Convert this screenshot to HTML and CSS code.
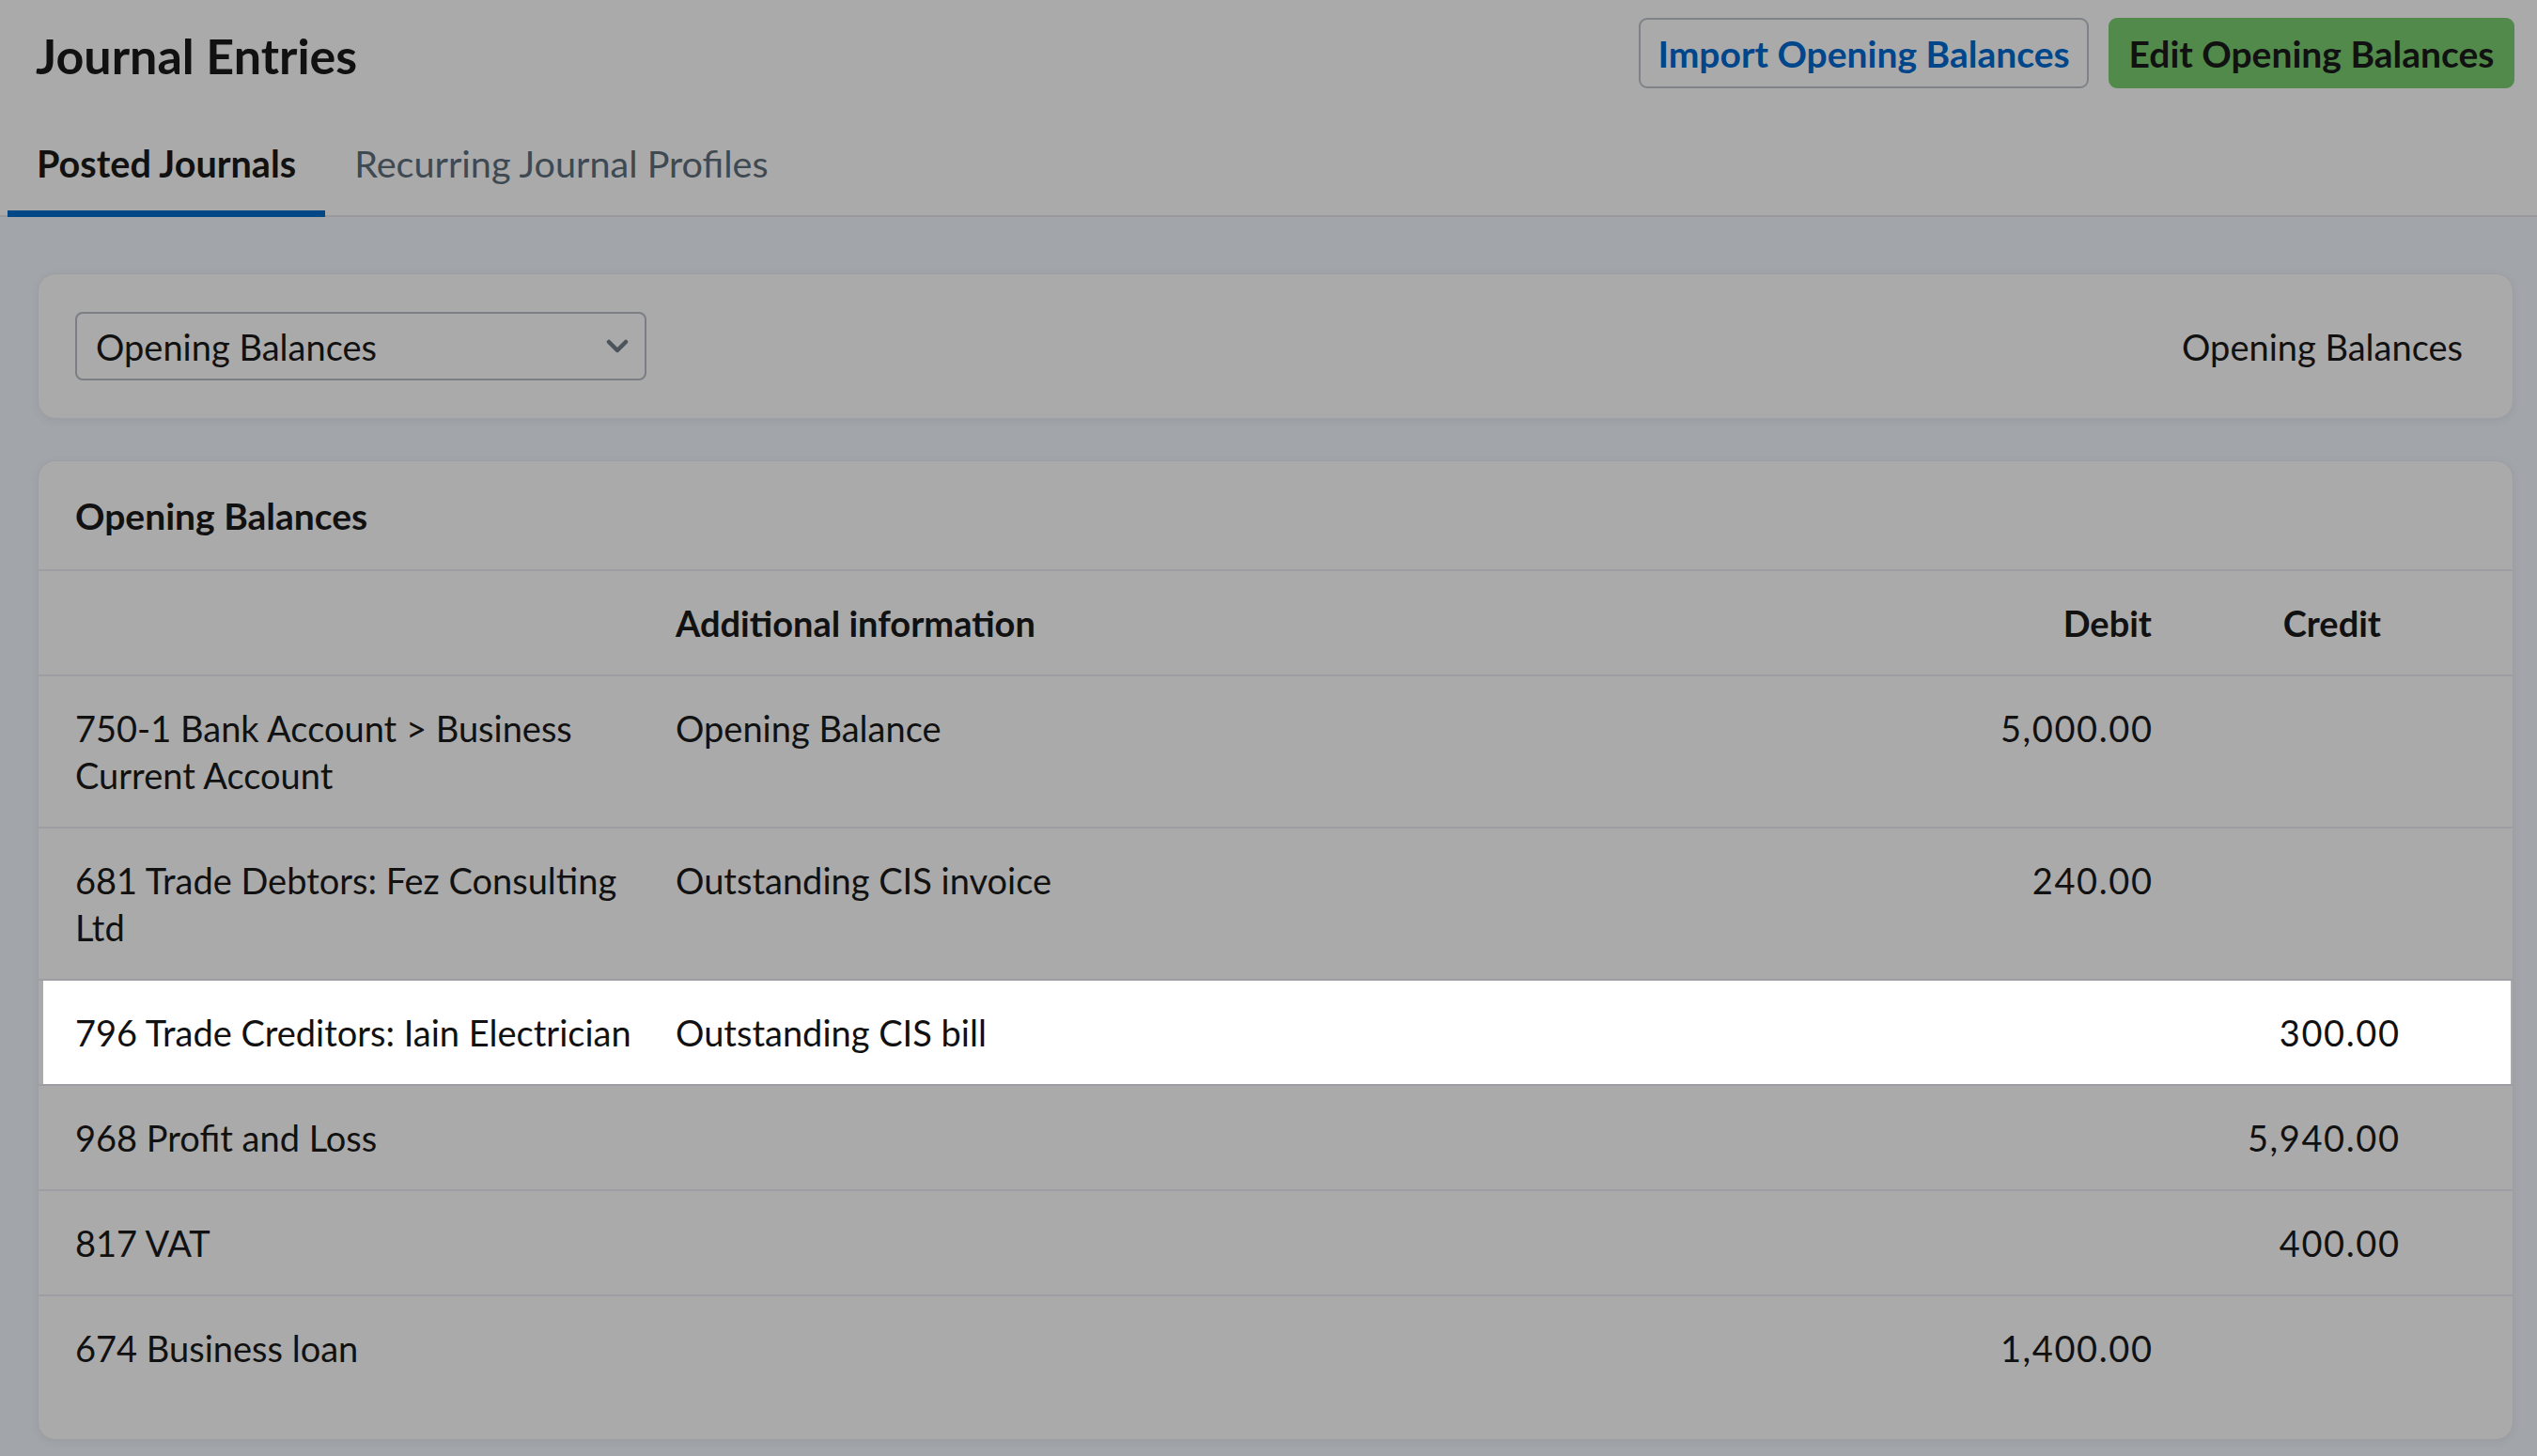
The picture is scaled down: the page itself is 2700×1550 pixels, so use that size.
FILE: index.html
```html
<!DOCTYPE html>
<html lang="en">
<head>
<meta charset="utf-8">
<title>Journal Entries</title>
<link rel="stylesheet" href="styles.css">
</head>
<body>
<header class="page-header">
  <div class="topbar">
    <h1 class="title">Journal Entries</h1>
    <div class="actions">
      <button class="btn btn-outline">Import Opening Balances</button>
      <button class="btn btn-green">Edit Opening Balances</button>
    </div>
  </div>
  <nav class="tabs">
    <a class="tab tab-active">Posted Journals</a>
    <a class="tab">Recurring Journal Profiles</a>
  </nav>
</header>

<main class="content">
  <section class="card filter-card">
    <div class="select">
      <span class="select-value">Opening Balances</span>
      <svg class="chevron" width="24" height="16" viewBox="0 0 24 16"><path d="M3 3 L12 12 L21 3" fill="none" stroke="#4b545c" stroke-width="4.5" stroke-linecap="round" stroke-linejoin="round"/></svg>
    </div>
    <div class="filter-label">Opening Balances</div>
  </section>

  <section class="card table-card">
    <h2 class="card-title">Opening Balances</h2>
    <div class="table">
      <div class="row row-head">
        <div class="cell cell-account"></div>
        <div class="cell">Additional information</div>
        <div class="cell num">Debit</div>
        <div class="cell num credit-head">Credit</div>
      </div>
      <div class="row">
        <div class="cell cell-account">750-1 Bank Account &gt; Business Current Account</div>
        <div class="cell">Opening Balance</div>
        <div class="cell num amount">5,000.00</div>
        <div class="cell num amount"></div>
      </div>
      <div class="row">
        <div class="cell cell-account">681 Trade Debtors: Fez Consulting Ltd</div>
        <div class="cell">Outstanding CIS invoice</div>
        <div class="cell num amount">240.00</div>
        <div class="cell num amount"></div>
      </div>
      <div class="row row-highlight">
        <div class="cell cell-account">796 Trade Creditors: Iain Electrician</div>
        <div class="cell">Outstanding CIS bill</div>
        <div class="cell num amount"></div>
        <div class="cell num amount">300.00</div>
      </div>
      <div class="row">
        <div class="cell cell-account">968 Profit and Loss</div>
        <div class="cell"></div>
        <div class="cell num amount"></div>
        <div class="cell num amount">5,940.00</div>
      </div>
      <div class="row">
        <div class="cell cell-account">817 VAT</div>
        <div class="cell"></div>
        <div class="cell num amount"></div>
        <div class="cell num amount">400.00</div>
      </div>
      <div class="row row-last">
        <div class="cell cell-account">674 Business loan</div>
        <div class="cell"></div>
        <div class="cell num amount">1,400.00</div>
        <div class="cell num amount"></div>
      </div>
    </div>
  </section>
</main>
</body>
</html>
```

FILE: styles.css
```css
* { box-sizing: border-box; }

html, body {
  margin: 0;
  padding: 0;
}

body {
  background: #a2a5aa;
  font-family: Lato, "Noto Sans", sans-serif;
  font-size: 38px;
  line-height: 50px;
  color: #111111;
  min-height: 1550px;
}

.page-header {
  background: #aaaaaa;
}

.topbar {
  display: flex;
  justify-content: space-between;
  align-items: center;
  padding: 19px 24px 0 38px;
}

.title {
  margin: 5px 0 0;
  font-size: 52px;
  line-height: 60px;
  font-weight: 700;
  color: #111111;
}

.actions {
  display: flex;
  gap: 21px;
}

.btn {
  font-family: inherit;
  font-size: 39px;
  font-weight: 700;
  line-height: 52px;
  height: 75px;
  padding: 0 10px;
  border-radius: 9px;
  cursor: pointer;
}

.btn-outline {
  width: 479px;
  background: #aaaaaa;
  border: 2px solid #7f8286;
  color: #00468a;
}

.btn-green {
  width: 432px;
  background: #528a4b;
  border: 2px solid #528a4b;
  color: #111111;
}

.tabs {
  display: flex;
  padding-left: 8px;
  margin-top: 54px;
  border-bottom: 2px solid #9a9a9b;
}

.tab {
  display: block;
  padding: 0 31px 24px;
  margin-bottom: -2px;
  border-bottom: 7px solid transparent;
  color: #3f4952;
  font-size: 39.6px;
  line-height: 52px;
  text-decoration: none;
}

.tab-active {
  color: #111111;
  font-weight: 700;
  border-bottom-color: #004785;
}

.content {
  padding: 60px 25px 10px 40px;
  display: flex;
  flex-direction: column;
  gap: 44px;
}

.card {
  background: #aaaaaa;
  border: 1px solid #9b9ea3;
  border-radius: 19px;
  box-shadow: 0 2px 10px rgba(0, 0, 0, 0.06);
}

.filter-card {
  display: flex;
  align-items: center;
  justify-content: space-between;
  padding: 40px 53px 40px 39px;
}

.select {
  width: 608px;
  height: 73px;
  border: 2px solid #7b7e82;
  border-radius: 8px;
  display: flex;
  align-items: center;
  justify-content: space-between;
  padding: 0 17px 0 20px;
}

.select-value {
  color: #111111;
}

.chevron {
  display: block;
}

.filter-label {
  color: #111111;
}

.table-card {
  padding-bottom: 42px;
}

.card-title {
  margin: 0;
  padding: 33px 39px 32px;
  font-size: 39px;
  line-height: 50px;
  font-weight: 700;
  border-bottom: 2px solid #9c9ea3;
}

.row {
  display: grid;
  grid-template-columns: 639px 1fr 300px 263px;
  padding: 30px 121px 30px 39px;
  border-bottom: 2px solid #9c9ea3;
  background-clip: padding-box;
}

.row-head {
  font-weight: 700;
}

.row-last {
  border-bottom: none;
}

.row-highlight {
  background: #ffffff;
  box-shadow: inset 5px 0 0 #aaaaaa, inset -2px 0 0 #aaaaaa;
}

.cell-account {
  padding-right: 24px;
}

.num {
  text-align: right;
}

.amount {
  letter-spacing: 1.6px;
  margin-right: -1.6px;
}

.credit-head {
  padding-right: 19px;
}
```
